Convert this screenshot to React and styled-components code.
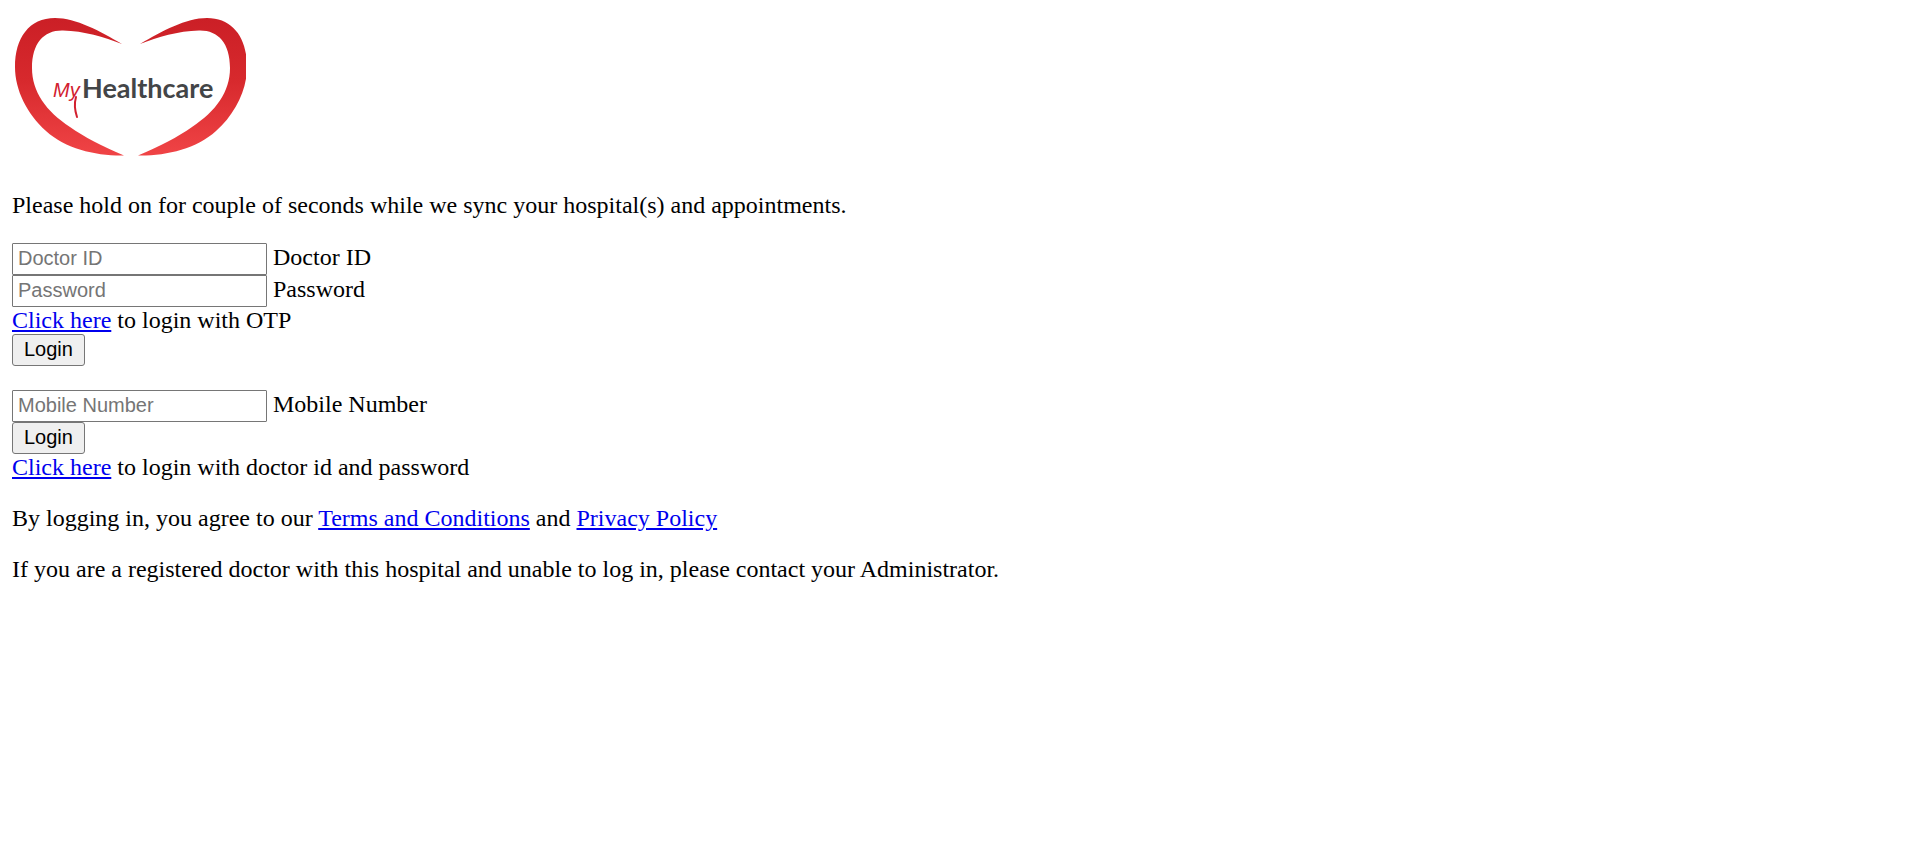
import React from "react";
import styled, { createGlobalStyle } from "styled-components";

const GlobalStyle = createGlobalStyle`
  body {
    margin: 12px;
    background: #fff;
    color: #000;
    font-family: "Liberation Serif", "Times New Roman", serif;
    font-size: 24px;
    line-height: 27px;
  }
`;

const Logo = styled.svg`
  display: block;
  width: 234px;
  height: 156px;
`;

const Paragraph = styled.p`
  margin: 24px 0;
`;

const Form = styled.form`
  margin: 0 0 24px;
`;

const Field = styled.div`
  display: flex;
  align-items: baseline;
  gap: 6px;
`;

const TextBox = styled.input`
  box-sizing: border-box;
  width: 255px;
  height: 32px;
  margin: 0;
  padding: 0 5px 1px;
  border: 1px solid #767676;
  border-radius: 1px;
  background: #fff;
  font-family: "Liberation Sans", Arial, sans-serif;
  font-size: 20px;

  &::placeholder {
    color: #757575;
  }
`;

const Button = styled.button`
  display: block;
  box-sizing: border-box;
  height: 32px;
  margin: 0;
  padding: 0 11px 1px;
  border: 1px solid #767676;
  border-radius: 3px;
  background: #efefef;
  color: #000;
  font-family: "Liberation Sans", Arial, sans-serif;
  font-size: 20px;
`;

const Link = styled.a`
  color: #0000ee;
  text-decoration: underline;
`;

const halfHeart =
  "M122 44 C100 31 76 18 55 18 C29 18 15 38 15 67 C15 90 27 114 46 131 C66 149 96 156 124 155.5 C102 146 84 137 70 127 C46 111 32 92 32 68 C32 43 44 30 63 30.5 C84 31 104 37 122 44Z";

function HealthcareLogo() {
  return (
    <Logo viewBox="12 12 234 156" role="img" aria-label="MyHealthcare">
      <defs>
        <linearGradient id="heart" gradientUnits="userSpaceOnUse" x1="0" y1="18" x2="0" y2="156">
          <stop offset="0" stopColor="#cb1f26" />
          <stop offset="0.45" stopColor="#d7292d" />
          <stop offset="1" stopColor="#f04446" />
        </linearGradient>
      </defs>
      <path d={halfHeart} fill="url(#heart)" />
      <path d={halfHeart} fill="url(#heart)" transform="matrix(-1 0 0 1 262 0)" />
      <text
        x="53"
        y="97"
        fill="#d2202f"
        fontFamily="'Liberation Sans', Arial, sans-serif"
        fontStyle="italic"
        fontSize="20"
      >
        My
      </text>
      <path d="M76 97 C74 104 75 111 77 117" fill="none" stroke="#d2202f" strokeWidth="2" strokeLinecap="round" />
      <text x="82" y="98" fill="#434547" fontFamily="Lato, sans-serif" fontWeight="700" fontSize="27">
        Healthcare
      </text>
    </Logo>
  );
}

function LabeledInput({ id, label, type = "text" }) {
  return (
    <Field>
      <TextBox id={id} type={type} placeholder={label} />
      <label htmlFor={id}>{label}</label>
    </Field>
  );
}

export default function App() {
  const stay = (event) => event.preventDefault();
  return (
    <main>
      <GlobalStyle />
      <HealthcareLogo />
      <Paragraph>
        Please hold on for couple of seconds while we sync your hospital(s) and appointments.
      </Paragraph>
      <Form onSubmit={stay}>
        <LabeledInput id="doctor-id" label="Doctor ID" />
        <LabeledInput id="password" label="Password" type="password" />
        <div>
          <Link href="#otp">Click here</Link> to login with OTP
        </div>
        <Button type="submit">Login</Button>
      </Form>
      <Form onSubmit={stay}>
        <LabeledInput id="mobile" label="Mobile Number" type="tel" />
        <Button type="submit">Login</Button>
        <div>
          <Link href="#password-login">Click here</Link> to login with doctor id and password
        </div>
      </Form>
      <Paragraph>
        By logging in, you agree to our <Link href="#terms">Terms and Conditions</Link> and{" "}
        <Link href="#privacy">Privacy Policy</Link>
      </Paragraph>
      <Paragraph>
        If you are a registered doctor with this hospital and unable to log in, please contact your Administrator.
      </Paragraph>
    </main>
  );
}
